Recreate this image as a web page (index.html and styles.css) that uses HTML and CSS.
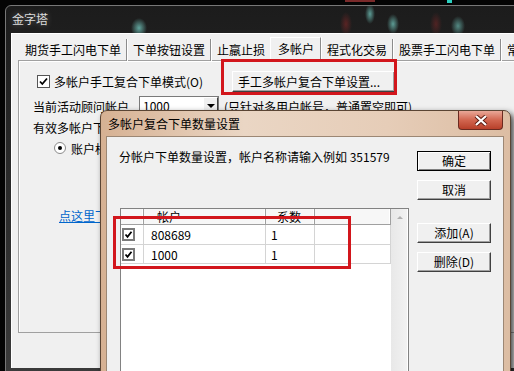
FILE: index.html
```html
<!DOCTYPE html>
<html lang="zh-CN">
<head>
    <meta charset="UTF-8">
    <meta name="viewport" content="width=device-width, initial-scale=1.0">
    <title>金字塔</title>
    <link rel="stylesheet" href="styles.css">
</head>
<body>
    <div class="desktop">
        <div class="main-win">
            <div class="main-title">金字塔</div>
            <div class="main-client">
                <ul class="tabs">
                    <li>期货手工闪电下单</li>
                    <li>下单按钮设置</li>
                    <li>止羸止损</li>
                    <li class="active">多帐户</li>
                    <li>程式化交易</li>
                    <li>股票手工闪电下单</li>
                    <li>常规设置</li>
                </ul>
                <div class="tab-panel">
                    <div class="row row-mode">
                        <label class="check-label">
                            <svg class="check" width="13" height="13" viewBox="0 0 13 13">
                                <rect x="0.5" y="0.5" width="12" height="12" fill="#fff" stroke="#555"/>
                                <path d="M3 6.5 L5.3 9 L10 3.5" fill="none" stroke="#000" stroke-width="1.8"/>
                            </svg>
                            <span>多帐户手工复合下单模式(O)</span>
                        </label>
                        <button class="btn btn-setup">手工多帐户复合下单设置...</button>
                    </div>
                    <div class="row row-account">
                        <span class="label">当前活动顾问帐户</span>
                        <div class="combo">
                            <span class="combo-text">1000</span>
                            <span class="combo-drop"><i></i></span>
                        </div>
                        <span class="hint">(只针对多用户帐号，普通置空即可)</span>
                    </div>
                    <div class="row row-valid">有效多帐户下单方式：</div>
                    <div class="row row-radio">
                        <span class="radio"><i></i></span>
                        <span>账户标识下单</span>
                    </div>
                    <a class="link" href="#">点这里下载使用说明</a>
                </div>
            </div>
        </div>

        <div class="dialog">
            <div class="dlg-title">多帐户复合下单数量设置</div>
            <div class="dlg-close">
                <svg width="14" height="11" viewBox="0 0 14 11">
                    <path d="M2 1 L12 10 M12 1 L2 10" stroke="#5a1a10" stroke-width="4"/>
                    <path d="M2 1 L12 10 M12 1 L2 10" stroke="#fff" stroke-width="2.2"/>
                </svg>
            </div>
            <div class="dlg-client">
                <div class="dlg-main">
                    <div class="prompt">分帐户下单数量设置，帐户名称请输入例如 351579</div>
                    <div class="listbox">
                        <div class="grid">
                            <div class="hd"></div>
                            <div class="hd hd-name">帐户</div>
                            <div class="hd hd-ratio">系数</div>
                            <div class="hd"></div>

                            <div class="cell cell-chk">
                                <svg width="13" height="13" viewBox="0 0 13 13">
                                    <rect x="1" y="1" width="11" height="11" fill="#fff" stroke="#7a7a7a" stroke-width="2"/>
                                    <path d="M3.5 6.5 L5.5 8.8 L9.5 3.8" fill="none" stroke="#000" stroke-width="1.8"/>
                                </svg>
                            </div>
                            <div class="cell cell-name">808689</div>
                            <div class="cell cell-ratio">1</div>
                            <div class="cell"></div>

                            <div class="cell cell-chk">
                                <svg width="13" height="13" viewBox="0 0 13 13">
                                    <rect x="1" y="1" width="11" height="11" fill="#fff" stroke="#7a7a7a" stroke-width="2"/>
                                    <path d="M3.5 6.5 L5.5 8.8 L9.5 3.8" fill="none" stroke="#000" stroke-width="1.8"/>
                                </svg>
                            </div>
                            <div class="cell cell-name">1000</div>
                            <div class="cell cell-ratio">1</div>
                            <div class="cell"></div>
                        </div>
                        <div class="vscroll"><i></i></div>
                    </div>
                </div>
                <div class="dlg-side">
                    <button class="btn btn-side btn-default">确定</button>
                    <button class="btn btn-side btn-cancel">取消</button>
                    <button class="btn btn-side btn-add">添加(A)</button>
                    <button class="btn btn-side btn-del">删除(D)</button>
                </div>
            </div>
        </div>

        <!-- red annotation boxes -->
        <div class="mark mark-btn"></div>
        <div class="mark mark-list"></div>
    </div>
</body>
</html>
```

FILE: styles.css
```css
body {
    margin: 0;
    background: #000;
    font-family: "Noto Sans CJK SC", "Noto Sans", sans-serif;
    font-size: 12px;
    color: #000;
}

.desktop {
    position: relative;
    width: 514px;
    height: 371px;
    overflow: hidden;
    background:
        linear-gradient(#2bd0c0, #2bd0c0) 447px 0 / 5px 3px no-repeat,
        linear-gradient(#7a2a2a, #7a2a2a) 345px 0 / 30px 2px no-repeat,
        #040404;
}

/* main window */
.main-win {
    position: absolute;
    left: 5px;
    top: 5px;
    width: 540px;
    height: 372px;
    box-sizing: border-box;
    padding-left: 5px;
    border: 1px solid #777;
    border-radius: 6px 6px 0 0;
    background:
        radial-gradient(ellipse 8px 10px at 133px 22px, rgba(120, 210, 200, 0.75), transparent),
        radial-gradient(ellipse 5px 10px at 364px 8px, rgba(120, 210, 200, 0.7), transparent),
        radial-gradient(ellipse 6px 10px at 387px 18px, rgba(120, 210, 200, 0.7), transparent),
        radial-gradient(ellipse 7px 10px at 452px 20px, rgba(120, 210, 200, 0.6), transparent),
        radial-gradient(ellipse 6px 12px at 340px 18px, rgba(130, 40, 40, 0.6), transparent),
        radial-gradient(ellipse 6px 12px at 430px 18px, rgba(130, 40, 40, 0.5), transparent),
        linear-gradient(#1c1c1c, #2d2d2d 60%, #3b3b3b);
}

.main-title {
    height: 27px;
    line-height: 25px;
    padding-left: 1px;
    color: #dcdcdc;
    text-shadow: 0 0 6px rgba(255, 255, 255, 0.35);
}

.main-client {
    height: 335px;
    background: #f0f0f0;
    box-shadow: inset 1px 1px 0 #fff;
}

.tabs {
    display: flex;
    margin: 0;
    padding: 4px 0 0 8px;
    height: 27px;
    box-sizing: border-box;
    list-style: none;
}

.tabs li {
    height: 21px;
    margin-top: 2px;
    padding: 1px 5px 0 6px;
    line-height: 20px;
    white-space: nowrap;
    border-right: 1px solid #8c8c8c;
    box-shadow: 1px 0 0 #fff;
}

.tabs li.active {
    position: relative;
    z-index: 1;
    height: 24px;
    margin: 0 0 -1px -1px;
    padding: 0 6px 0 7px;
    line-height: 22px;
    background: #f0f0f0;
    border-left: 1px solid #fff;
    border-top: 1px solid #fff;
}

.tab-panel {
    margin-left: 7px;
    height: 273px;
    box-sizing: border-box;
    padding: 10px 0 0 14px;
    border: 1px solid #a0a0a0;
    border-right: none;
    box-shadow: inset 1px 1px 0 #fff;
}

.row {
    display: flex;
    align-items: center;
    white-space: nowrap;
}

.row-mode {
    height: 21px;
    margin-left: 4px;
}

.check-label {
    display: flex;
    align-items: center;
    gap: 4px;
    width: 195px;
}

.btn {
    font: inherit;
    color: #000;
    background: #f0f0f0;
    border: 1px solid;
    border-color: #fff #404040 #404040 #fff;
    box-shadow: inset -1px -1px 0 #a0a0a0;
    padding: 0;
    line-height: 16px;
}

.btn-setup {
    width: 163px;
    height: 21px;
    text-align: left;
    padding-left: 5px;
}

.row-account {
    height: 22px;
    margin-top: 3px;
}

.combo {
    display: flex;
    width: 80px;
    height: 20px;
    margin-left: 10px;
    box-sizing: border-box;
    border: 1px solid #7a7a7a;
    background: #fff;
}

.combo-text {
    flex: 1;
    padding-left: 3px;
    line-height: 17px;
}

.combo-drop {
    display: flex;
    align-items: center;
    justify-content: center;
    width: 15px;
    box-sizing: border-box;
    background: #f0f0f0;
    border: 1px solid;
    border-color: #fff #404040 #404040 #fff;
}

.combo-drop i {
    border-left: 4px solid transparent;
    border-right: 4px solid transparent;
    border-top: 4px solid #000;
}

.hint {
    margin-left: 5px;
}

.row-valid {
    height: 20px;
}

.row-radio {
    height: 20px;
    margin-top: 1px;
    margin-left: 21px;
    gap: 5px;
}

.radio {
    display: flex;
    align-items: center;
    justify-content: center;
    width: 12px;
    height: 12px;
    box-sizing: border-box;
    border: 1px solid #8a8a8a;
    border-radius: 50%;
    background: #fff;
}

.radio i {
    width: 4px;
    height: 4px;
    border-radius: 50%;
    background: #000;
}

.link {
    display: inline-block;
    margin: 49px 0 0 26px;
    line-height: 18px;
    color: #0066cc;
}

/* dialog */
.dialog {
    position: absolute;
    left: 100px;
    top: 110px;
    width: 411px;
    height: 280px;
    box-sizing: border-box;
    padding: 0 7px 0 6px;
    border: 1px solid #5a4534;
    border-radius: 7px 7px 0 0;
    background: linear-gradient(to right, #d6b193, #ead6c4 35%, #e6cdb8 70%, #dcbda3);
    box-shadow: 3px 3px 6px rgba(0, 0, 0, 0.7);
    z-index: 2;
}

.dlg-title {
    height: 26px;
    line-height: 26px;
    padding-left: 1px;
}

.dlg-close {
    position: absolute;
    right: 7px;
    top: 0;
    width: 45px;
    height: 19px;
    display: flex;
    align-items: center;
    justify-content: center;
    box-sizing: border-box;
    border: 1px solid #6a2a20;
    border-top: none;
    border-radius: 0 0 4px 4px;
    background: linear-gradient(#e9a898, #d26650 50%, #b8402a);
}

.dlg-client {
    display: flex;
    height: 260px;
    padding: 13px 0 0 12px;
    box-sizing: border-box;
    background: #f0f0f0;
    box-shadow: 0 0 0 1px #9c8774;
}

.dlg-main {
    width: 290px;
}

.prompt {
    line-height: 14px;
    white-space: nowrap;
}

.listbox {
    display: flex;
    margin: 44px 0 0 1px;
    height: 170px;
    border: 1px solid #828282;
    background: #fff;
}

.grid {
    display: grid;
    grid-template-columns: 23px 122px 49px 76px;
    grid-template-rows: 16px 20px 19px;
    align-content: start;
    width: 270px;
}

.hd {
    line-height: 15px;
    background: #f7f7f7;
    border-bottom: 1px solid #a0a0a0;
    border-right: 1px solid #a0a0a0;
    box-shadow: inset -1px 0 0 #fff;
}

.hd-name {
    padding-left: 13px;
}

.hd-ratio {
    padding-left: 11px;
}

.cell {
    line-height: 19px;
    border-bottom: 1px solid #d4d4d4;
    border-right: 1px solid #d4d4d4;
}

.cell-chk {
    display: flex;
    align-items: center;
    padding-left: 1px;
}

.cell-name {
    padding-left: 7px;
}

.cell-ratio {
    padding-left: 5px;
}

.vscroll {
    flex: 1;
    display: flex;
    justify-content: center;
    padding-top: 7px;
    background: linear-gradient(to right, #e8e8e8, #f2f2f2);
    box-shadow: inset -1px 0 0 #fff;
}

.vscroll i {
    width: 0;
    height: 0;
    border-left: 3px solid transparent;
    border-right: 3px solid transparent;
    border-bottom: 3px solid #b0b0b0;
}

.dlg-side {
    display: flex;
    flex-direction: column;
    width: 74px;
    margin-left: 8px;
    padding-top: 1px;
}

.btn-side {
    height: 20px;
    text-align: center;
}

.btn-default {
    border: 1px solid #000;
    box-shadow: inset 1px 1px 0 #fff, inset -1px -1px 0 #808080;
}

.btn-cancel {
    margin-top: 9px;
}

.btn-add {
    margin-top: 23px;
}

.btn-del {
    margin-top: 9px;
}

/* annotations */
.mark {
    position: absolute;
    box-sizing: border-box;
    border: 3px solid #d2161c;
    z-index: 5;
}

.mark-btn {
    left: 221px;
    top: 59px;
    width: 176px;
    height: 36px;
}

.mark-list {
    left: 113px;
    top: 216px;
    width: 238px;
    height: 53px;
}
```
